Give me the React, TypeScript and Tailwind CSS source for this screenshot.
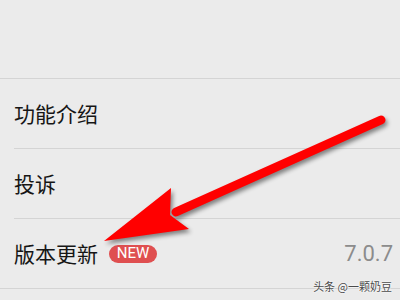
const rows = ['功能介绍', '投诉']

export default function App() {
  return (
    <div
      className="relative h-[300px] w-[400px] overflow-hidden bg-[#ebebeb] text-[#161616]"
      style={{ fontFamily: '"Noto Sans CJK SC", "Noto Sans", sans-serif' }}
    >
      <div className="h-[79px] border-b border-[#d4d4d4]" />
      <div className="pl-[14px]">
        {rows.map((r) => (
          <div key={r} className="flex h-[70px] items-center border-b border-[#d4d4d4] text-[21px]">
            {r}
          </div>
        ))}
      </div>
      <div className="flex h-[70px] items-center justify-between border-b border-[#d4d4d4] pl-[14px] pr-[7px]">
        <div className="flex items-center">
          <span className="text-[21px]">版本更新</span>
          <span
            className="ml-[11px] flex h-[18px] w-[48px] items-center justify-center rounded-full bg-[#df4f50] text-[15px] text-white"
            style={{ fontFamily: 'Roboto, sans-serif' }}
          >
            NEW
          </span>
        </div>
        <span className="text-[22px] text-[#8c8c8c]" style={{ fontFamily: 'Roboto, sans-serif' }}>
          7.0.7
        </span>
      </div>

      <svg
        className="absolute left-0 top-0"
        width="400"
        height="300"
        style={{ filter: 'drop-shadow(2px 3px 2px rgba(0,0,0,0.45))' }}
      >
        <line x1="176" y1="212" x2="381" y2="120" stroke="#ff0000" strokeWidth="9" strokeLinecap="round" />
        <polygon points="104,241 171,188 170,215 189,229" fill="#ff0000" />
      </svg>

      <div
        className="absolute bottom-[6px] right-[8px] text-[11px] text-[#4a4a4a]"
        style={{ textShadow: '0 0 2px #fff, 0 0 2px #fff' }}
      >
        头条 @一颗奶豆
      </div>
    </div>
  )
}
